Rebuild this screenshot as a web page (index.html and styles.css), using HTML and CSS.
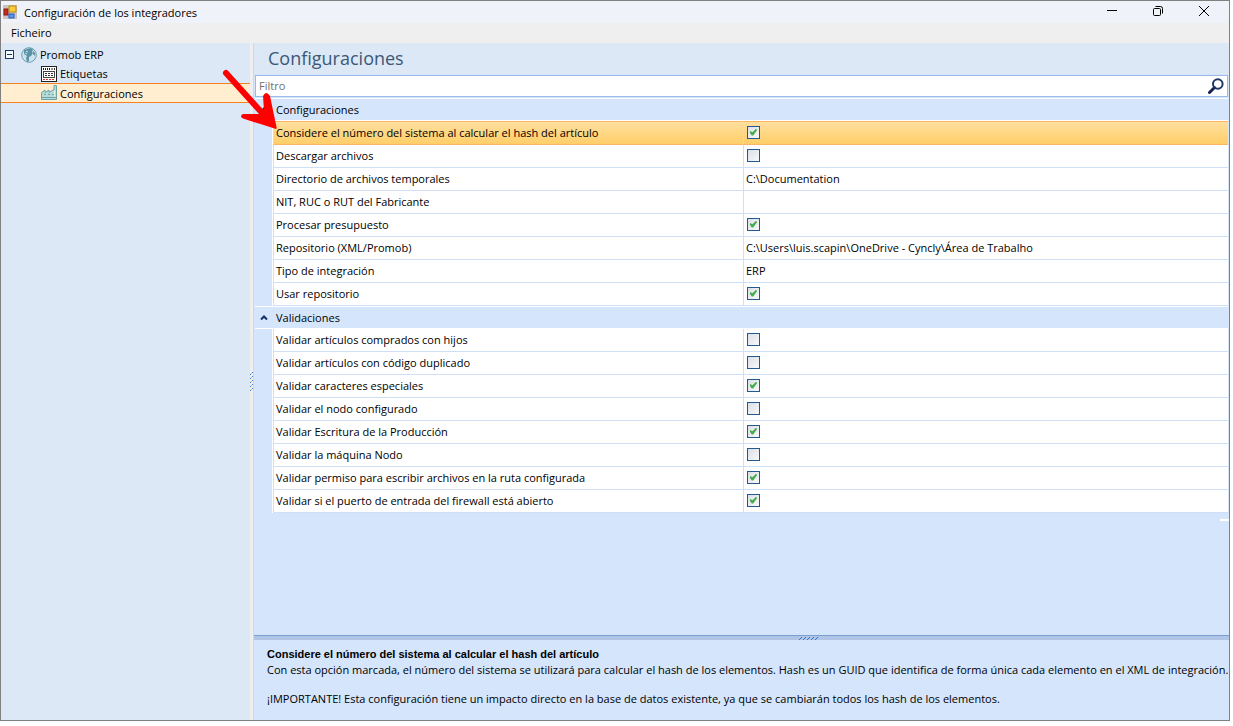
FILE: index.html
```html
<!DOCTYPE html>
<html lang="es">
<head>
  <meta charset="UTF-8" />
  <meta name="viewport" content="width=device-width, initial-scale=1" />
  <title>Configuración de los integradores</title>
  <link rel="stylesheet" href="styles.css">
</head>
<body>

  <div class="window">
    <header class="titlebar">
      <svg class="app-icon" width="14" height="14" viewBox="0 0 14 14">
        <rect width="14" height="14" fill="#c9c6c2"/>
        <rect x="1" y="4" width="4" height="6" fill="#c62b20" stroke="#8c1a12"/>
        <rect x="6" y="1" width="7" height="6" fill="#fbcb3c" stroke="#b98a12"/>
        <rect x="6" y="9" width="5" height="4" fill="#5b93ee" stroke="#2d5fc0"/>
      </svg>
      <span class="window-title">Configuración de los integradores</span>
      <button type="button" class="window-button" aria-label="Minimizar">
        <svg width="12" height="12" viewBox="0 0 12 12"><path d="M1 4.500h10" stroke="#000" fill="none"/></svg>
      </button>
      <button type="button" class="window-button" aria-label="Restaurar">
        <svg width="12" height="12" viewBox="0 0 12 12" fill="none" stroke="#000"><rect x="1.500" y="2.500" width="7" height="7" rx="1"/><path d="M3.500 .5h5q2 0 2 2v5"/></svg>
      </button>
      <button type="button" class="window-button" aria-label="Cerrar">
        <svg width="12" height="12" viewBox="0 0 12 12"><path d="M1 0l10 10M11 0L1 10" stroke="#000" fill="none"/></svg>
      </button>
    </header>

    <nav class="menubar">
      <button type="button" class="menu-item">Ficheiro</button>
    </nav>

    <div class="content">
      <aside class="sidebar">
        <a href="#" class="tree-item">
          <svg width="10" height="10" viewBox="0 0 10 10"><rect x=".5" y=".5" width="8" height="8" fill="#f4f8ff" stroke="#1c3765"/><path d="M2 4.500h5" stroke="#1c3765"/></svg>
          <svg class="tree-globe" width="16" height="16" viewBox="0 0 16 16">
            <circle cx="8" cy="8" r="7.300" fill="#cfe3ee" stroke="#6b9cae"/>
            <path d="M3 3L6 2l4-1 2 2-1 2 1 1-2 3-2 1v4l-2 1-1-4 1-2-3-2zM12 4l2 2v3l-2-2z" fill="#5b93a6"/>
            <path d="M5 4l2 1M4 6l2 1" stroke="#cfe3ee"/>
          </svg>
          <span>Promob ERP</span>
        </a>
        <a href="#" class="tree-item tree-child">
          <svg width="16" height="16" viewBox="0 0 16 16">
            <rect x=".5" y=".5" width="15" height="15" fill="#fff" stroke="#222"/>
            <path d="M2.500 2v2M4.500 2v2M6.500 2v2M8.500 2v2M11 2v2M13.500 2v2" stroke="#222"/>
            <rect x="2.500" y="5.500" width="11" height="6" fill="#fff" stroke="#444"/>
            <path d="M4 7.500h2M7 7.500h2M10 7.500h2M4 9.500h2M7 9.500h2M10 9.500h2" stroke="#333"/>
            <path d="M2 13.500h12" stroke="#d33" stroke-dasharray="2 1"/>
          </svg>
          <span>Etiquetas</span>
        </a>
        <a href="#" class="tree-item tree-child selected">
          <svg width="16" height="16" viewBox="0 0 16 16">
            <path d="M.5 14.500V7.500L4 5v2.500L8 5v2.500L12 5h1V.5h2.500v14z" fill="#b5dcd9" stroke="#6fa3a8"/>
            <path d="M3 9.500h2M7 9.500h2M11 9.500h2M1 12.500h14" stroke="#6fa3a8"/>
            <path d="M13.500 5v7" stroke="#e4f4f2"/>
          </svg>
          <span>Configuraciones</span>
        </a>
      </aside>

      <div class="splitter">
        <svg width="3" height="20" viewBox="0 0 3 20"><path d="M0 3l3-3M0 7l3-3M0 11l3-3M0 15l3-3M0 19l3-3" stroke="#2f78d0" stroke-dasharray="2 1"/></svg>
      </div>

      <main class="main">
        <h1 class="page-title">Configuraciones</h1>

        <div class="filter">
          <input type="text" class="filter-input" placeholder="Filtro" aria-label="Filtro" />
          <button type="button" class="filter-button" aria-label="Buscar">
            <svg width="16" height="16" viewBox="0 0 16 16" fill="none"><path d="M6.500 9.500L1.500 14.500" stroke="#12244f" stroke-width="3" stroke-linecap="round"/><circle cx="9.800" cy="6" r="4.800" stroke="#1d3768" stroke-width="2"/></svg>
          </button>
        </div>

        <div class="grid">
          <table class="properties">
            <colgroup>
              <col class="col-gutter" />
              <col class="col-name" />
              <col />
            </colgroup>
            <tbody>
              <tr class="group">
                <th class="toggle"><svg width="8" height="6" viewBox="0 0 8 6"><path d="M1 4.500l3-3 3 3" stroke="#12306b" stroke-width="2" fill="none"/></svg></th>
                <th colspan="2">Configuraciones</th>
              </tr>
              <tr class="active">
                <td class="gutter"></td>
                <td><label for="hash">Considere el número del sistema al calcular el hash del artículo</label></td>
                <td><input type="checkbox" id="hash" checked /></td>
              </tr>
              <tr>
                <td class="gutter"></td>
                <td><label for="download">Descargar archivos</label></td>
                <td><input type="checkbox" id="download" /></td>
              </tr>
              <tr>
                <td class="gutter"></td>
                <td>Directorio de archivos temporales</td>
                <td>C:\Documentation</td>
              </tr>
              <tr>
                <td class="gutter"></td>
                <td>NIT, RUC o RUT del Fabricante</td>
                <td></td>
              </tr>
              <tr>
                <td class="gutter"></td>
                <td><label for="budget">Procesar presupuesto</label></td>
                <td><input type="checkbox" id="budget" checked /></td>
              </tr>
              <tr>
                <td class="gutter"></td>
                <td>Repositorio (XML/Promob)</td>
                <td>C:\Users\luis.scapin\OneDrive - Cyncly\Área de Trabalho</td>
              </tr>
              <tr>
                <td class="gutter"></td>
                <td>Tipo de integración</td>
                <td>ERP</td>
              </tr>
              <tr>
                <td class="gutter"></td>
                <td><label for="repository">Usar repositorio</label></td>
                <td><input type="checkbox" id="repository" checked /></td>
              </tr>
            </tbody>
            <tbody>
              <tr class="group">
                <th class="toggle"><svg width="8" height="6" viewBox="0 0 8 6"><path d="M1 4.500l3-3 3 3" stroke="#12306b" stroke-width="2" fill="none"/></svg></th>
                <th colspan="2">Validaciones</th>
              </tr>
              <tr>
                <td class="gutter"></td>
                <td><label for="children">Validar artículos comprados con hijos</label></td>
                <td><input type="checkbox" id="children" /></td>
              </tr>
              <tr>
                <td class="gutter"></td>
                <td><label for="duplicate">Validar artículos con código duplicado</label></td>
                <td><input type="checkbox" id="duplicate" /></td>
              </tr>
              <tr>
                <td class="gutter"></td>
                <td><label for="special">Validar caracteres especiales</label></td>
                <td><input type="checkbox" id="special" checked /></td>
              </tr>
              <tr>
                <td class="gutter"></td>
                <td><label for="node">Validar el nodo configurado</label></td>
                <td><input type="checkbox" id="node" /></td>
              </tr>
              <tr>
                <td class="gutter"></td>
                <td><label for="production">Validar Escritura de la Producción</label></td>
                <td><input type="checkbox" id="production" checked /></td>
              </tr>
              <tr>
                <td class="gutter"></td>
                <td><label for="machine">Validar la máquina Nodo</label></td>
                <td><input type="checkbox" id="machine" /></td>
              </tr>
              <tr>
                <td class="gutter"></td>
                <td><label for="permission">Validar permiso para escribir archivos en la ruta configurada</label></td>
                <td><input type="checkbox" id="permission" checked /></td>
              </tr>
              <tr>
                <td class="gutter"></td>
                <td><label for="firewall">Validar si el puerto de entrada del firewall está abierto</label></td>
                <td><input type="checkbox" id="firewall" checked /></td>
              </tr>
            </tbody>
          </table>
          <div class="grid-end"></div>
        </div>

        <div class="details-splitter">
          <svg width="20" height="3" viewBox="0 0 20 3"><path d="M0 3l3-3M4 3l3-3M8 3l3-3M12 3l3-3M16 3l3-3" stroke="#2f78d0"/></svg>
        </div>
        <section class="details">
          <h2>Considere el número del sistema al calcular el hash del artículo</h2>
          <p>Con esta opción marcada, el número del sistema se utilizará para calcular el hash de los elementos. Hash es un GUID que identifica de forma única cada elemento en el XML de integración.</p>
          <p>¡IMPORTANTE! Esta configuración tiene un impacto directo en la base de datos existente, ya que se cambiarán todos los hash de los elementos.</p>
        </section>
      </main>
    </div>

    <svg class="arrow" width="60" height="64" viewBox="0 0 60 64">
      <path d="M6 6L44 48" stroke="#f00" stroke-width="6" stroke-linecap="round"/>
      <path d="M23 47Q19 49 23 51.500L56 62Q57 61.500 56.500 60L50 29Q46 23 43 29L44 43L39 47Z" fill="#f00"/>
    </svg>
  </div>

</body>
</html>
```
FILE: styles.css
```css
* {
  box-sizing: border-box;
}

body {
  margin: 0;
  padding: 0 3px 5px 0;
  background: #fff;
  color: #000;
  font-family: "Open Sans", "Noto Sans", sans-serif;
  font-size: 11px;
  line-height: 15px;
}

button {
  font: inherit;
  color: inherit;
  background: none;
  border: none;
  padding: 0;
}

svg {
  display: block;
  flex: none;
}

.window {
  position: relative;
  display: flex;
  flex-direction: column;
  min-height: calc(100vh - 5px);
  border: 1px solid #808080;
}

.titlebar {
  display: flex;
  align-items: center;
  height: 22px;
  padding-left: 2px;
  background: #f0f2f9;
}

.window-title {
  flex: 1;
  padding-left: 7px;
}

.window-button {
  display: flex;
  align-items: center;
  justify-content: center;
  width: 46px;
  height: 20px;
}

.window-button:last-child {
  margin-right: 2px;
}

.menubar {
  display: flex;
  align-items: center;
  height: 20px;
  padding: 0 10px 1px;
  background: #efefef;
}

.content {
  flex: 1;
  display: flex;
}

.sidebar {
  width: 249px;
  padding-top: 2px;
  background: #dce8f6;
}

.tree-item {
  display: flex;
  align-items: center;
  height: 19px;
  padding-left: 4px;
  color: #000;
  text-decoration: none;
}

.tree-globe {
  margin-left: 6px;
}

.tree-item span {
  padding-left: 3px;
}

.tree-child {
  padding-left: 40px;
}

.tree-item.selected {
  height: 20px;
  background: #ffefd0;
  border: solid #f58220;
  border-width: 1px 0;
}

.splitter {
  display: flex;
  align-items: center;
  width: 4px;
  background: #efefef;
  border-right: 1px solid #c3daf9;
}

.main {
  flex: 1;
  min-width: 0;
  display: flex;
  flex-direction: column;
  background: #d4e5fc;
}

.page-title {
  margin: 0;
  padding: 0 14px;
  height: 31px;
  background: #dce8f6;
  color: #3b5878;
  font-size: 18px;
  font-weight: normal;
  line-height: 30px;
}

.filter {
  display: flex;
  height: 22px;
  margin: 1px 1px 0;
  border: 1px solid #9abaea;
  background: #fff;
}

.filter-input {
  flex: 1;
  min-width: 0;
  padding: 0 3px 2px;
  border: none;
  outline: none;
  background: none;
  font: inherit;
}

.filter-input::placeholder {
  color: #707070;
}

.filter-button {
  padding: 0 3px;
}

.grid {
  flex: 1;
}

.properties {
  width: 100%;
  margin-top: 1px;
  padding: 0 1px;
  table-layout: fixed;
  border-collapse: separate;
  border-spacing: 0;
}

.col-gutter {
  width: 18px;
}

.col-name {
  width: 471px;
}

.properties th,
.properties td {
  height: 23px;
  padding: 0 2px;
  text-align: left;
  font-weight: normal;
  white-space: nowrap;
}

.properties th {
  padding-left: 3px;
  border: solid #fff;
  border-width: 1px 0;
}

.properties th.toggle {
  padding: 0 5px;
}

.properties td {
  padding-bottom: 2px;
  background: #fff;
  border-bottom: 1px solid #cfdff5;
}

.properties td:nth-child(2) {
  border-left: 1px solid #cfdff5;
  border-right: 1px solid #cfdff5;
}

.properties td.gutter {
  background: #d4e5fc;
  border-bottom: none;
  border-right: 1px solid #fff;
}

.properties .active td {
  height: 24px;
}

.properties .active td:not(.gutter) {
  background: linear-gradient(#ffdf9e, #ffce69);
  border-top: 1px solid #f9b765;
  border-bottom: 1px solid #f9b765;
}

.properties input {
  display: block;
  appearance: none;
  width: 13px;
  height: 13px;
  margin: 0 1px;
  border: 1px solid #215a91;
  background: linear-gradient(135deg, #dcdfe8, #f8f8fb);
}

.properties input:checked::before {
  content: "";
  display: block;
  width: 7px;
  height: 7px;
  margin: 2px;
  background: #43ad49;
  clip-path: polygon(0 35%, 35% 55%, 90% 0, 100% 25%, 45% 100%, 25% 100%, 0 65%);
}

.grid-end {
  width: 9px;
  height: 2px;
  margin: 6px 0 0 auto;
  background: #fff;
}

.details-splitter {
  display: flex;
  justify-content: center;
  height: 5px;
  padding-top: 1px;
  padding-left: 135px;
  border-top: 1px solid #7a9fd6;
  background: #b0c5e6;
}

.details {
  min-height: 80px;
  padding: 6px 0 6px 13px;
}

.details h2 {
  margin: 0;
  color: #000;
  font-family: "Liberation Sans", Arial, sans-serif;
  font-size: 11px;
  line-height: 16px;
}

.details p {
  margin: 0 0 14px;
}

.details p:last-child {
  margin: 0;
}

.arrow {
  position: absolute;
  left: 219px;
  top: 66px;
  pointer-events: none;
}
```
